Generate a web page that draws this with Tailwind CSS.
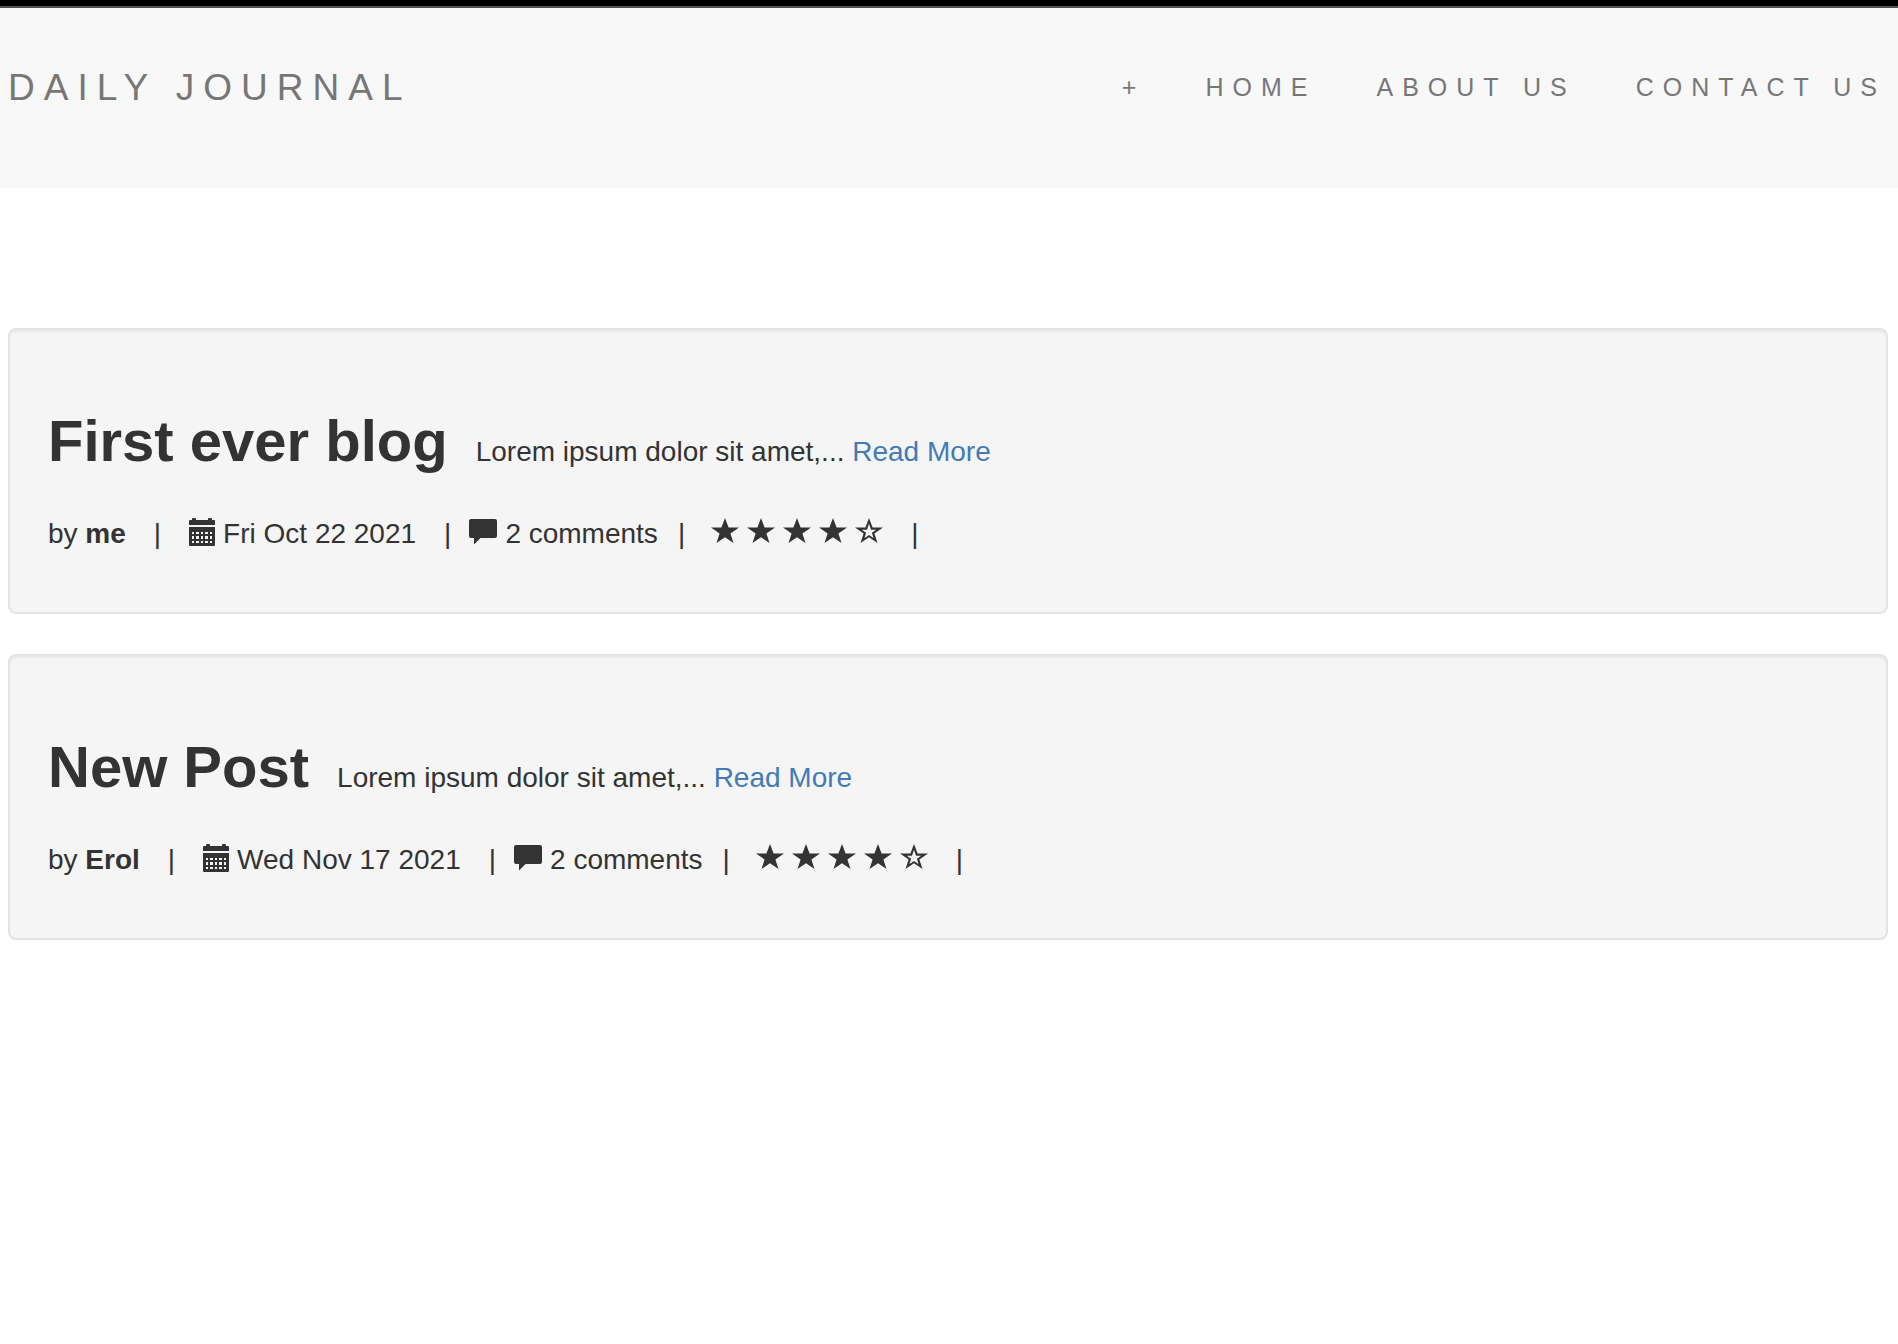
<!DOCTYPE html>
<html lang="en">
<head>
<meta charset="utf-8">
<meta name="viewport" content="width=device-width, initial-scale=1">
<title>Daily Journal</title>
<script src="https://cdn.jsdelivr.net/npm/@tailwindcss/browser@4"></script>
</head>
<body class="bg-white font-['Liberation_Sans',Arial,sans-serif] text-[28px] leading-10 text-[#333]">
<svg class="hidden" aria-hidden="true">
  <symbol id="calendar" viewBox="0 0 26 28">
    <path fill-rule="evenodd" d="M0 7V3q0-1 1-1h2V1q0-1 1-1h2q1 0 1 1v1h12V1q0-1 1-1h2q1 0 1 1v1h2q1 0 1 1v4zM0 9h26v18q0 1-1 1H1q-1 0-1-1zM3 14h2v2H3zm4 0h3v2H7zm5 0h2v2h-2zm4 0h3v2h-3zm5 0h2v2h-2zM3 18h2v3H3zm4 0h3v3H7zm5 0h2v3h-2zm4 0h3v3h-3zm5 0h2v3h-2zM3 23h2v2H3zm4 0h3v2H7zm5 0h2v2h-2zm4 0h3v2h-3zm5 0h2v2h-2z"/>
  </symbol>
  <symbol id="comment" viewBox="0 0 28 26">
    <path d="M2 0h24q2 0 2 2v15q0 2-2 2H11.500l-6.500 6.500V19H2q-2 0-2-2V2q0-2 2-2z"/>
  </symbol>
  <symbol id="star" viewBox="0 0 28 26">
    <path d="M14 0l3.600 9.500H28l-8.600 6L22.500 25 14 19.300 5.500 25l3.100-9.500L0 9.500h10.400z"/>
  </symbol>
  <symbol id="star-empty" viewBox="0 0 28 26">
    <path fill-rule="evenodd" d="M14 0l3.600 9.500H28l-8.600 6L22.500 25 14 19.300 5.500 25l3.100-9.500L0 9.500h10.400zM14 5.800l-2 5.900H6.800l4.300 3.100-1.600 5.100 4.500-3 4.500 3-1.600-5.100 4.300-3.100H16z"/>
  </symbol>
</svg>

<header class="flex h-[188px] items-start justify-between border-t-[6px] border-black bg-[#f8f8f8] text-[#777] shadow-[inset_0_2px_0_#505050]">
  <a href="#" class="mt-[62px] ml-2 text-[37px] leading-10 tracking-[9px]">DAILY JOURNAL</a>
  <nav aria-label="Main" class="mt-[61px] mr-3 flex gap-[60px] text-[25px] tracking-[9px]">
    <a href="#">+</a>
    <a href="#">HOME</a>
    <a href="#">ABOUT US</a>
    <a href="#">CONTACT US</a>
  </nav>
</header>

<main class="mt-[140px] mr-2.5 ml-2 flex flex-col gap-10">
  <article class="rounded-lg border-2 border-[#e3e3e3] bg-[#f5f5f5] px-[38px] pt-[78px] pb-[58px] shadow-[inset_0_2px_2px_rgba(0,0,0,0.05)]">
    <div class="flex items-baseline gap-7">
      <h2 class="text-[58px] leading-[66px] font-bold">First ever blog</h2>
      <p>Lorem ipsum dolor sit amet,... <a href="#" class="text-[#427bb7]">Read More</a></p>
    </div>
    <div class="mt-10 flex items-center">
      <span>by <b>me</b></span>
      <span class="mx-7">|</span>
      <svg class="mr-2 mb-1 h-7 w-[26px] fill-current"><use href="#calendar"/></svg>
      <time datetime="2021-10-22">Fri Oct 22 2021</time>
      <span class="mr-[18px] ml-7">|</span>
      <svg class="mr-2 mb-1 h-[26px] w-7 fill-current"><use href="#comment"/></svg>
      <span>2 comments</span>
      <span class="mr-[26px] ml-5">|</span>
      <span class="mb-1.5 flex gap-2 fill-current" role="img" aria-label="4 out of 5 stars">
        <svg class="h-[26px] w-7"><use href="#star"/></svg>
        <svg class="h-[26px] w-7"><use href="#star"/></svg>
        <svg class="h-[26px] w-7"><use href="#star"/></svg>
        <svg class="h-[26px] w-7"><use href="#star"/></svg>
        <svg class="h-[26px] w-7"><use href="#star-empty"/></svg>
      </span>
      <span class="ml-7">|</span>
    </div>
  </article>

  <article class="rounded-lg border-2 border-[#e3e3e3] bg-[#f5f5f5] px-[38px] pt-[78px] pb-[58px] shadow-[inset_0_2px_2px_rgba(0,0,0,0.05)]">
    <div class="flex items-baseline gap-7">
      <h2 class="text-[58px] leading-[66px] font-bold">New Post</h2>
      <p>Lorem ipsum dolor sit amet,... <a href="#" class="text-[#427bb7]">Read More</a></p>
    </div>
    <div class="mt-10 flex items-center">
      <span>by <b>Erol</b></span>
      <span class="mx-7">|</span>
      <svg class="mr-2 mb-1 h-7 w-[26px] fill-current"><use href="#calendar"/></svg>
      <time datetime="2021-11-17">Wed Nov 17 2021</time>
      <span class="mr-[18px] ml-7">|</span>
      <svg class="mr-2 mb-1 h-[26px] w-7 fill-current"><use href="#comment"/></svg>
      <span>2 comments</span>
      <span class="mr-[26px] ml-5">|</span>
      <span class="mb-1.5 flex gap-2 fill-current" role="img" aria-label="4 out of 5 stars">
        <svg class="h-[26px] w-7"><use href="#star"/></svg>
        <svg class="h-[26px] w-7"><use href="#star"/></svg>
        <svg class="h-[26px] w-7"><use href="#star"/></svg>
        <svg class="h-[26px] w-7"><use href="#star"/></svg>
        <svg class="h-[26px] w-7"><use href="#star-empty"/></svg>
      </span>
      <span class="ml-7">|</span>
    </div>
  </article>
</main>
</body>
</html>
